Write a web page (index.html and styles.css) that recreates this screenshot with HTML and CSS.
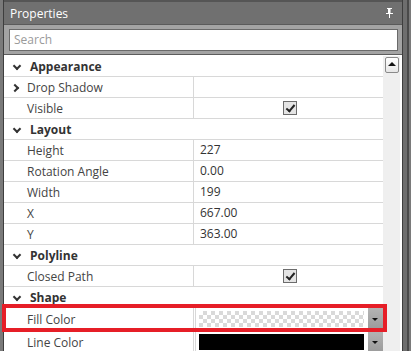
FILE: index.html
```html
<!DOCTYPE html>
<html lang="en">
<head>
    <meta charset="UTF-8">
    <title>Properties</title>
    <link rel="stylesheet" href="styles.css">
</head>
<body>
    <div class="frame">
        <div class="panel">
            <div class="header">
                <span class="title">Properties</span>
                <svg class="pin" width="9" height="10" viewBox="0 0 9 10">
                    <rect x="2" y="0" width="5" height="1" fill="#fff"/>
                    <rect x="3" y="1" width="3" height="5" fill="#fff"/>
                    <rect x="5" y="1" width="1" height="5" fill="#bbb"/>
                    <rect x="1" y="5" width="7" height="1" fill="#fff"/>
                    <rect x="4" y="6" width="1" height="4" fill="#fff"/>
                </svg>
            </div>
            <div class="search-band">
                <div class="search">Search</div>
            </div>
            <div class="list">
                <div class="grid">
                    <div class="row cat"><span class="chev down"></span>Appearance</div>
                    <div class="row"><div class="name"><span class="chev right"></span>Drop Shadow</div><div class="value"></div></div>
                    <div class="row"><div class="name">Visible</div><div class="value center"><span class="check"></span></div></div>
                    <div class="row cat"><span class="chev down"></span>Layout</div>
                    <div class="row"><div class="name">Height</div><div class="value">227</div></div>
                    <div class="row"><div class="name">Rotation Angle</div><div class="value">0.00</div></div>
                    <div class="row"><div class="name">Width</div><div class="value">199</div></div>
                    <div class="row"><div class="name">X</div><div class="value">667.00</div></div>
                    <div class="row"><div class="name">Y</div><div class="value">363.00</div></div>
                    <div class="row cat"><span class="chev down"></span>Polyline</div>
                    <div class="row"><div class="name">Closed Path</div><div class="value center"><span class="check"></span></div></div>
                    <div class="row cat"><span class="chev down"></span>Shape</div>
                    <div class="row tall"><div class="name">Fill Color</div><div class="value color"><span class="swatch checker"></span><span class="drop"></span></div></div>
                    <div class="row tall"><div class="name">Line Color</div><div class="value color"><span class="swatch black"></span><span class="drop"></span></div></div>
                </div>
                <div class="scrollbar">
                    <div class="scroll-up"></div>
                </div>
            </div>
            <div class="highlight"></div>
        </div>
        <div class="side"></div>
    </div>
</body>
</html>
```
FILE: styles.css
```css
body {
    margin: 0;
    background-color: #7a7a7a;
    font-family: "Open Sans", "Noto Sans", sans-serif;
    font-size: 12px;
}
.frame {
    display: flex;
    height: 351px;
    overflow: hidden;
    padding-left: 3px;
}
.panel {
    position: relative;
    width: 398px;
    border-left: 1px solid #3e3e3e;
    border-right: 1px solid #3e3e3e;
    background-color: #fff;
}
.side {
    width: 4px;
    background-color: #6e6e6e;
    border-right: 2px solid #4a4a4a;
}
.header {
    display: flex;
    align-items: center;
    justify-content: space-between;
    height: 22px;
    padding: 0 8px 0 6px;
    background-color: #707070;
    border-top: 2px solid #555;
    border-bottom: 1px solid #5a5a5a;
    color: #fff;
    font-size: 12px;
}
.search-band {
    height: 24px;
    padding: 4px 4px 1px 5px;
    background-color: #a3a3a3;
    border-bottom: 1px solid #5c5c5c;
}
.search {
    height: 20px;
    line-height: 20px;
    padding-left: 4px;
    background-color: #fff;
    border: 1px solid #6a6a6a;
    color: #9a9a9a;
    font-size: 12px;
}
.list {
    display: flex;
    padding-top: 1px;
}
.grid {
    width: 379px;
}
.row {
    display: flex;
    height: 20px;
    line-height: 22px;
    border-bottom: 1px solid #d8d8d8;
    color: #444;
}
.row.tall {
    height: 22px;
    line-height: 24px;
}
.row.cat {
    align-items: center;
    height: 18px;
    padding-top: 2px;
    font-weight: bold;
    color: #333;
}
.name {
    position: relative;
    width: 166px;
    padding-left: 23px;
    border-right: 1px solid #d8d8d8;
}
.value {
    display: flex;
    align-items: center;
    flex: 1;
    padding-left: 6px;
    color: #333;
}
.value.center {
    justify-content: center;
    padding-left: 0;
}
.value.color {
    align-items: flex-start;
    padding-left: 0;
    border-left: 1px solid #d8d8d8;
    margin-left: 1px;
}
.chev {
    display: inline-block;
    width: 4px;
    height: 4px;
    border-right: 2px solid #333;
    border-bottom: 2px solid #333;
}
.chev.down {
    margin: 0 10px 3px 10px;
    transform: rotate(45deg);
}
.chev.right {
    position: absolute;
    left: 8px;
    top: 8px;
    transform: rotate(-45deg);
}
.check {
    position: relative;
    width: 12px;
    height: 12px;
    margin-left: 2px;
    border: 1px solid #6c6c6c;
    background-color: #e4e4e4;
}
.check::after {
    content: "";
    position: absolute;
    left: 4px;
    top: 1px;
    width: 3px;
    height: 7px;
    border-right: 2px solid #222;
    border-bottom: 2px solid #222;
    transform: rotate(40deg);
}
.swatch {
    width: 165px;
    height: 16px;
    margin: 3px 4px 0 3px;
}
.checker {
    background-color: #fff;
    background-image:
        linear-gradient(45deg, #d9d9d9 25%, transparent 25%, transparent 75%, #d9d9d9 75%),
        linear-gradient(45deg, #d9d9d9 25%, transparent 25%, transparent 75%, #d9d9d9 75%);
    background-size: 8px 8px;
    background-position: 0 0, 4px 4px;
}
.black {
    background-color: #000;
}
.drop {
    position: relative;
    width: 15px;
    height: 22px;
    background: linear-gradient(#b4b4b4, #9a9a9a);
}
.drop::after {
    content: "";
    position: absolute;
    left: 4px;
    top: 10px;
    border-left: 3px solid transparent;
    border-right: 3px solid transparent;
    border-top: 3px solid #111;
}
.scrollbar {
    width: 17px;
    height: 300px;
    background-color: #efefef;
}
.scroll-up {
    position: relative;
    width: 12px;
    height: 14px;
    margin: 1px 0 0 2px;
    border: 1px solid #8a8a8a;
    border-radius: 2px;
    background: linear-gradient(#fff, #e6e6e6);
}
.scroll-up::after {
    content: "";
    position: absolute;
    left: 2px;
    top: 4px;
    border-left: 4px solid transparent;
    border-right: 4px solid transparent;
    border-bottom: 4px solid #111;
}
.highlight {
    position: absolute;
    left: -2px;
    top: 304px;
    width: 377px;
    height: 20px;
    border: 4px solid #e61e27;
}
```
